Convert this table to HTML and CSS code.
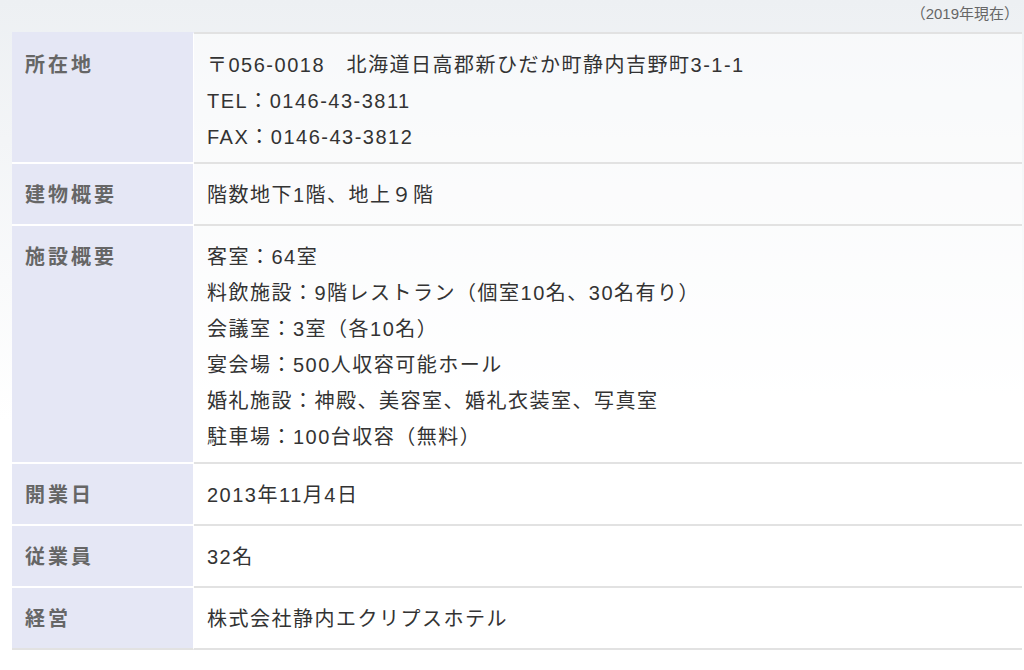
FILE: index.html
```html
<!DOCTYPE html>
<html lang="ja">
<head>
<meta charset="utf-8">
<title>会社概要</title>
<link rel="stylesheet" href="styles.css">
</head>
<body>
<div class="wrap">
  <p class="note">（2019年現在）</p>
  <table class="info">
    <tr>
      <th>所在地</th>
      <td>〒056-0018　北海道日高郡新ひだか町静内吉野町3-1-1<br>TEL：0146-43-3811<br>FAX：0146-43-3812</td>
    </tr>
    <tr>
      <th>建物概要</th>
      <td>階数地下1階、地上９階</td>
    </tr>
    <tr>
      <th>施設概要</th>
      <td>客室：64室<br>料飲施設：9階レストラン（個室10名、30名有り）<br>会議室：3室（各10名）<br>宴会場：500人収容可能ホール<br>婚礼施設：神殿、美容室、婚礼衣装室、写真室<br>駐車場：100台収容（無料）</td>
    </tr>
    <tr>
      <th>開業日</th>
      <td>2013年11月4日</td>
    </tr>
    <tr>
      <th>従業員</th>
      <td>32名</td>
    </tr>
    <tr class="last">
      <th>経営</th>
      <td>株式会社静内エクリプスホテル</td>
    </tr>
  </table>
</div>
</body>
</html>
```

FILE: styles.css
```css
html, body {
  margin: 0;
  padding: 0;
}
body {
  background: linear-gradient(to bottom, #edf0f3 0, #ffffff 420px) no-repeat;
  background-color: #fff;
  min-height: 670px;
  font-family: "Liberation Sans", "Noto Sans CJK JP", sans-serif;
  color: #333;
}
.wrap {
  padding: 0 2px 0 12px;
}
.note {
  margin: 0;
  padding: 0 3px 4px 0;
  text-align: right;
  font-size: 15px;
  line-height: 28px;
  color: #666;
}
.info {
  width: 100%;
  border-collapse: separate;
  border-spacing: 0;
}
.info th,
.info td {
  vertical-align: top;
  text-align: left;
  font-size: 20px;
  line-height: 36px;
}
.info th {
  width: 168px;
  padding: 13px 0 11px 13px;
  background: #e5e7f5;
  color: #666;
  font-weight: bold;
  letter-spacing: 3px;
  border-bottom: 2px solid #fff;
  border-right: 1px solid #fff;
}
.info td {
  padding: 13px 13px 7px 13px;
  background: rgba(255, 255, 255, 0.55);
  color: #333;
  letter-spacing: 1.5px;
  border-bottom: 2px solid #e2e2e2;
}
.info tr:first-child td {
  border-top: 2px solid #e2e2e2;
}
.info tr:first-child th {
  border-top: 2px solid transparent;
}
.info tr.last th {
  border-bottom-color: #e2e2e2;
}
```
